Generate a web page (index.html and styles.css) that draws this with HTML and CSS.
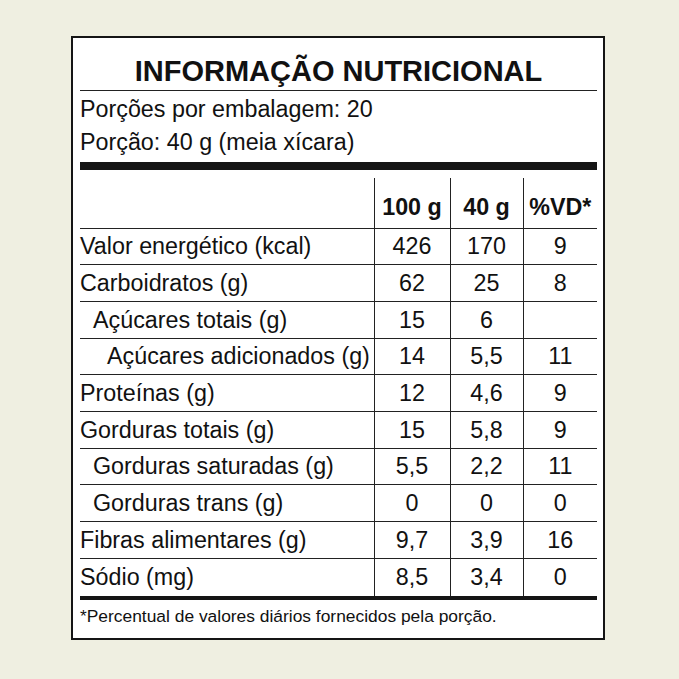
FILE: index.html
```html
<!DOCTYPE html>
<html lang="pt-BR">
<head>
<meta charset="utf-8">
<title>Informação Nutricional</title>
<link rel="stylesheet" href="styles.css">
</head>
<body>
<div class="page">
  <div class="label">
    <div class="title">INFORMAÇÃO NUTRICIONAL</div>
    <div class="serving">
      <div>Porções por embalagem: 20</div>
      <div>Porção: 40 g (meia xícara)</div>
    </div>
    <div class="bar"></div>
    <table class="facts">
      <colgroup>
        <col class="c-name"><col class="c-a"><col class="c-b"><col class="c-c">
      </colgroup>
      <thead>
        <tr><th></th><th>100 g</th><th>40 g</th><th>%VD*</th></tr>
      </thead>
      <tbody>
        <tr><td>Valor energético (kcal)</td><td>426</td><td>170</td><td>9</td></tr>
        <tr><td>Carboidratos (g)</td><td>62</td><td>25</td><td>8</td></tr>
        <tr><td class="ind1">Açúcares totais (g)</td><td>15</td><td>6</td><td></td></tr>
        <tr><td class="ind2">Açúcares adicionados (g)</td><td>14</td><td>5,5</td><td>11</td></tr>
        <tr><td>Proteínas (g)</td><td>12</td><td>4,6</td><td>9</td></tr>
        <tr><td>Gorduras totais (g)</td><td>15</td><td>5,8</td><td>9</td></tr>
        <tr><td class="ind1">Gorduras saturadas (g)</td><td>5,5</td><td>2,2</td><td>11</td></tr>
        <tr><td class="ind1">Gorduras trans (g)</td><td>0</td><td>0</td><td>0</td></tr>
        <tr><td>Fibras alimentares (g)</td><td>9,7</td><td>3,9</td><td>16</td></tr>
        <tr class="last"><td>Sódio (mg)</td><td>8,5</td><td>3,4</td><td>0</td></tr>
      </tbody>
    </table>
    <div class="note">*Percentual de valores diários fornecidos pela porção.</div>
  </div>
</div>
</body>
</html>
```

FILE: styles.css
```css
html, body {
  margin: 0;
  padding: 0;
  background: #efefe1;
}
.page {
  width: 679px;
  height: 679px;
  padding: 36px 0 0 71px;
  box-sizing: border-box;
  font-family: "Liberation Sans", Arial, sans-serif;
  color: #111;
}
.label {
  width: 534px;
  height: 604px;
  box-sizing: border-box;
  border: 2px solid #151515;
  background: #fff;
  padding: 0 6px 0 7px;
}
.title {
  height: 52px;
  font-size: 29px;
  font-weight: bold;
  text-align: center;
  line-height: 66px;
  border-bottom: 1px solid #222;
  overflow: hidden;
}
.serving {
  padding: 2px 0 3px 0;
  font-size: 23.3px;
  line-height: 33px;
}
.bar {
  height: 8px;
  background: #151515;
  margin-bottom: 8px;
}
.facts {
  width: 517px;
  border-collapse: collapse;
  table-layout: fixed;
  font-size: 23.3px;
  border-bottom: 4px solid #151515;
}
.c-name { width: 294px; }
.c-a { width: 76px; }
.c-b { width: 73px; }
.c-c { width: 74px; }
.facts th {
  height: 50px;
  padding: 10px 0 0 0;
  box-sizing: border-box;
  font-weight: bold;
  text-align: center;
  vertical-align: middle;
  border-bottom: 1px solid #222;
}
.facts th + th,
.facts td + td {
  border-left: 1px solid #222;
}
.facts td {
  height: 35.7px;
  line-height: 26px;
  padding: 0;
  text-align: center;
  vertical-align: middle;
  border-bottom: 1px solid #222;
  white-space: nowrap;
}
.facts td:first-child {
  text-align: left;
}
.facts tr.last td {
  border-bottom: none;
  height: 37px;
}
.facts td.ind1 { padding-left: 13px; }
.facts td.ind2 { padding-left: 27px; }
.note {
  font-size: 17.4px;
  line-height: 22px;
  padding-top: 5px;
}
```
